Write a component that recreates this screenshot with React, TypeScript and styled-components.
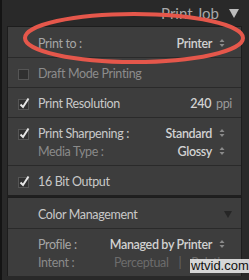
import React from 'react';
import styled, { createGlobalStyle } from 'styled-components';

const GlobalStyle = createGlobalStyle`
  body {
    margin: 0;
    background: #262626;
    font-family: Lato, 'Open Sans', sans-serif;
  }
`;

const Page = styled.div`
  position: relative;
  width: 249px;
  height: 280px;
  overflow: hidden;
  background: #292929;
  border-left: 2px solid #141414;
  box-sizing: border-box;
  padding-left: 5px;
`;

const Column = styled.div`
  width: 235px;
  display: flex;
  flex-direction: column;
`;

const Header = styled.div`
  height: 26px;
  display: flex;
  align-items: center;
  justify-content: flex-end;
  gap: 10px;
  padding-right: 3px;
  color: #a8a8a8;
  font-size: 15px;
`;

const Panel = styled.div`
  background: #3d3d3d;
  border: 1px solid #1d1d1d;
  border-bottom: none;
`;

const Divider = styled.div`
  height: 2px;
  background: #1f1f1f;
`;

const Section = styled.div<{ $first?: boolean }>`
  border-top: ${(p) => (p.$first ? 'none' : '1px solid #2a2a2a')};
  padding: ${(p) => (p.$first ? '7px' : '6px')} 0 5px;
`;

const Row = styled.div<{ $right?: number }>`
  height: 18px;
  display: flex;
  align-items: center;
  padding-left: 10px;
  padding-right: ${(p) => p.$right ?? 16}px;
  font-size: 12.5px;
  letter-spacing: -0.35px;
`;

const CheckSlot = styled.div`
  width: 20px;
  display: flex;
  align-items: center;
`;

const Label = styled.span<{ $tone?: 'bright' | 'mid' | 'dim' }>`
  margin-left: 20px;
  flex: 1;
  color: ${(p) => (p.$tone === 'bright' ? '#c9c9c9' : p.$tone === 'dim' ? '#8a8a8a' : '#a6a6a6')};
  white-space: nowrap;
`;

const CheckedLabel = styled.span<{ $dim?: boolean }>`
  flex: 1;
  color: ${(p) => (p.$dim ? '#8c8c8c' : '#c9c9c9')};
  white-space: nowrap;
`;

const Value = styled.span<{ $dim?: boolean }>`
  color: ${(p) => (p.$dim ? '#6c6c6c' : '#d2d2d2')};
  font-weight: ${(p) => (p.$dim ? 400 : 600)};
  white-space: nowrap;
`;

const Unit = styled.span`
  color: #9a9a9a;
  font-weight: 400;
  margin-left: 5px;
`;

const Spin = styled.span`
  display: inline-flex;
  margin-left: 7px;
  width: 6px;
`;

const Split = styled.span`
  color: #666;
  margin: 0 10px;
`;

const Ring = styled.svg`
  position: absolute;
  left: 20px;
  top: 11px;
  pointer-events: none;
`;

const Watermark = styled.div`
  position: absolute;
  left: 188px;
  top: 259px;
  padding: 0 1px;
  background: rgba(230, 230, 230, 0.9);
  color: #111;
  font-family: 'Liberation Sans', Arial, sans-serif;
  font-size: 13px;
  line-height: 14px;
`;

const Arrows = () => (
  <svg width="6" height="10" viewBox="0 0 6 10">
    <path d="M3 1 L5.5 4 L0.5 4 Z" fill="#8a8a8a" />
    <path d="M3 9 L5.5 6 L0.5 6 Z" fill="#8a8a8a" />
  </svg>
);

const Check = ({ on }: { on?: boolean }) => (
  <svg width="13" height="13" viewBox="0 0 13 13">
    <rect x="0.5" y="2.5" width="10" height="10" fill="#303030" stroke="#555" />
    {on && <path d="M2.5 7.5 L5 10 L10.5 1.5" fill="none" stroke="#e6e6e6" strokeWidth="2" />}
  </svg>
);

const Tri = ({ color, w = 10, h = 9 }: { color: string; w?: number; h?: number }) => (
  <svg width={w} height={h} viewBox={`0 0 ${w} ${h}`}>
    <path d={`M0 0 L${w} 0 L${w / 2} ${h} Z`} fill={color} />
  </svg>
);

export default function App() {
  return (
    <Page>
      <GlobalStyle />
      <Column>
        <Header>
          <span>Print Job</span>
          <Tri color="#bdbdbd" />
        </Header>
        <Panel>
          <Section $first>
            <Row>
              <Label>Print to :</Label>
              <Value>Printer</Value>
              <Spin><Arrows /></Spin>
            </Row>
          </Section>
          <Section>
            <Row>
              <CheckSlot><Check /></CheckSlot>
              <CheckedLabel $dim>Draft Mode Printing</CheckedLabel>
            </Row>
          </Section>
          <Section>
            <Row $right={9}>
              <CheckSlot><Check on /></CheckSlot>
              <CheckedLabel>Print Resolution</CheckedLabel>
              <Value>240<Unit>ppi</Unit></Value>
            </Row>
          </Section>
          <Section>
            <Row>
              <CheckSlot><Check on /></CheckSlot>
              <CheckedLabel>Print Sharpening :</CheckedLabel>
              <Value>Standard</Value>
              <Spin><Arrows /></Spin>
            </Row>
            <Row>
              <Label $tone="dim">Media Type :</Label>
              <Value>Glossy</Value>
              <Spin><Arrows /></Spin>
            </Row>
          </Section>
          <Section>
            <Row>
              <CheckSlot><Check on /></CheckSlot>
              <CheckedLabel>16 Bit Output</CheckedLabel>
            </Row>
          </Section>
        </Panel>
        <Divider />
        <Panel>
          <Section $first>
            <Row $right={9}>
              <Label $tone="bright">Color Management</Label>
              <Tri color="#262626" w={8} h={7} />
            </Row>
          </Section>
          <Section>
            <Row>
              <Label>Profile :</Label>
              <Value>Managed by Printer</Value>
              <Spin><Arrows /></Spin>
            </Row>
            <Row $right={9}>
              <Label $tone="dim">Intent :</Label>
              <Value $dim>Perceptual</Value>
              <Split>|</Split>
              <Value $dim>Relative</Value>
            </Row>
          </Section>
        </Panel>
      </Column>
      <Ring width="224" height="54" viewBox="0 0 224 54">
        <ellipse cx="112" cy="27" rx="109" ry="24" fill="none" stroke="#e5574b" strokeWidth="4" />
      </Ring>
      <Watermark>wtvid.com</Watermark>
    </Page>
  );
}
